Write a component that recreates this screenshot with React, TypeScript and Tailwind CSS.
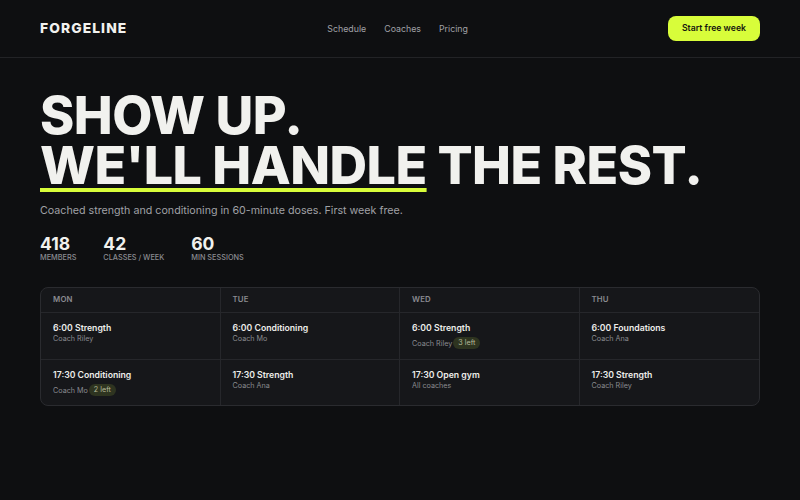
const stats = [
  { value: "418", label: "Members" },
  { value: "42", label: "Classes / week" },
  { value: "60", label: "Min sessions" },
];

type Slot = { title: string; coach: string; left?: string };

const days: { day: string; slots: Slot[] }[] = [
  {
    day: "Mon",
    slots: [
      { title: "6:00 Strength", coach: "Coach Riley" },
      { title: "17:30 Conditioning", coach: "Coach Mo", left: "2 left" },
    ],
  },
  {
    day: "Tue",
    slots: [
      { title: "6:00 Conditioning", coach: "Coach Mo" },
      { title: "17:30 Strength", coach: "Coach Ana" },
    ],
  },
  {
    day: "Wed",
    slots: [
      { title: "6:00 Strength", coach: "Coach Riley", left: "3 left" },
      { title: "17:30 Open gym", coach: "All coaches" },
    ],
  },
  {
    day: "Thu",
    slots: [
      { title: "6:00 Foundations", coach: "Coach Ana" },
      { title: "17:30 Strength", coach: "Coach Riley" },
    ],
  },
];

function Cell({ slot, last }: { slot: Slot; last: boolean }) {
  return (
    <div className={`px-3 pt-[9px] ${last ? "h-[45px]" : "h-[47px] border-b border-[#26272b]"}`}>
      <p className="text-[8.7px] font-semibold leading-[12px] text-[#ededea]">{slot.title}</p>
      {slot.left ? (
        <div className="mt-[3px] flex h-[12px] items-center gap-[1px]">
          <span className="text-[7.2px] leading-[9px] text-[#8a8b90]">{slot.coach}</span>
          <span className="flex h-[12px] items-center rounded-full bg-[#2e3420] px-[5px] text-[7.2px] text-[#b5b99a]">
            {slot.left}
          </span>
        </div>
      ) : (
        <p className="text-[7.2px] leading-[9px] text-[#8a8b90]">{slot.coach}</p>
      )}
    </div>
  );
}

export default function App() {
  return (
    <div
      className="min-h-screen w-full bg-[#0e0f11] text-[#f1f1ee]"
      style={{ fontFamily: "Inter, 'Liberation Sans', sans-serif" }}
    >
      <header className="flex h-[58px] items-center justify-between border-b border-[#222326] px-10">
        <span className="text-[13.8px] font-extrabold leading-none tracking-[0.08em]">FORGELINE</span>
        <nav className="flex gap-[18px] text-[8.8px] text-[#a0a1a6]">
          <a>Schedule</a>
          <a>Coaches</a>
          <a>Pricing</a>
        </nav>
        <button className="h-[25px] rounded-lg bg-[#d8fd3a] px-[14px] text-[8.7px] font-semibold text-[#16170f]">
          Start free week
        </button>
      </header>

      <main className="px-10 pt-[33px]">
        <h1 className="text-[52px] font-extrabold leading-[50px] tracking-[-0.01em] text-[#f1f1ee]">
          SHOW UP.
          <br />
          <span className="underline decoration-[#d8fd3a] decoration-4 underline-offset-[4px]">
            WE'LL HANDLE
          </span>{" "}
          THE REST.
        </h1>

        <p className="mt-[12px] text-[10.7px] leading-[16px] text-[#a0a1a6]">
          Coached strength and conditioning in 60-minute doses. First week free.
        </p>

        <div className="mt-[16px] flex gap-[27px]">
          {stats.map((s) => (
            <div key={s.label} className="flex flex-col">
              <span className="text-[17.5px] font-bold leading-[18px]">{s.value}</span>
              <span className="text-[7.3px] font-medium uppercase leading-[10px] text-[#8a8b90]">
                {s.label}
              </span>
            </div>
          ))}
        </div>

        <div className="mt-[24px] grid grid-cols-4 overflow-hidden rounded-lg border border-[#2a2b2f] bg-[#16171a]">
          {days.map((d, i) => (
            <div key={d.day} className={i < 3 ? "border-r border-[#26272b]" : ""}>
              <div className="flex h-[25px] items-center border-b border-[#26272b] px-3 text-[7.8px] font-semibold uppercase tracking-wide text-[#8a8b90]">
                {d.day}
              </div>
              {d.slots.map((slot, j) => (
                <Cell key={slot.title} slot={slot} last={j === d.slots.length - 1} />
              ))}
            </div>
          ))}
        </div>
      </main>
    </div>
  );
}
